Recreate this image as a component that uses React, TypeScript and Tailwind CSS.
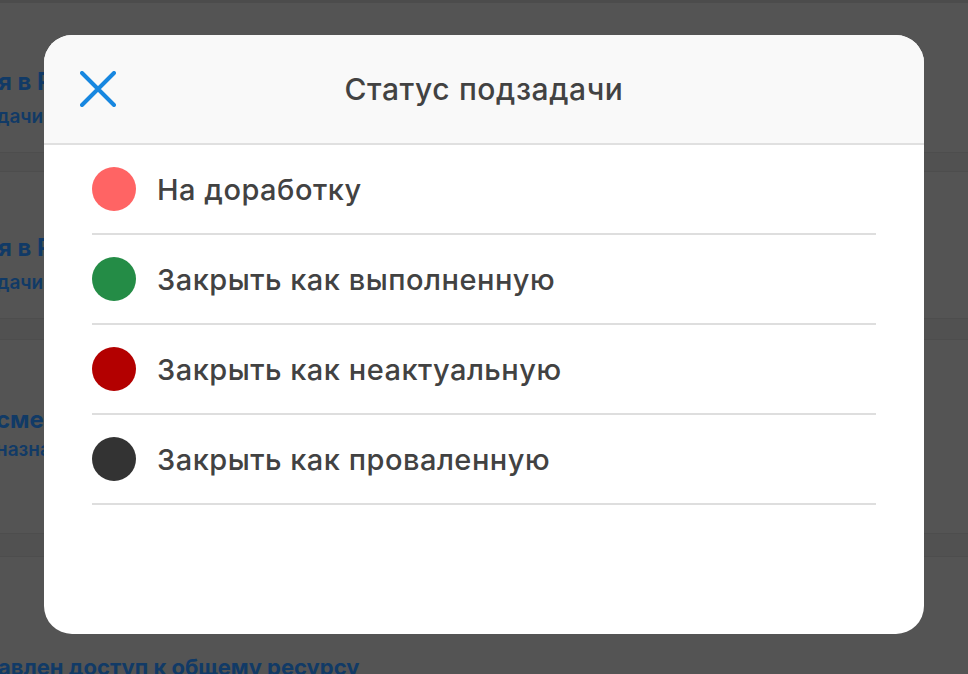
import React from "react";

const statuses = [
  { label: "На доработку", color: "bg-[#ff6464]" },
  { label: "Закрыть как выполненную", color: "bg-[#248c46]" },
  { label: "Закрыть как неактуальную", color: "bg-[#b30000]" },
  { label: "Закрыть как проваленную", color: "bg-[#333333]" },
];

function CloseIcon() {
  return (
    <svg width="36" height="36" viewBox="0 0 36 36" fill="none">
      <path d="M2 2L34 34M34 2L2 34" stroke="#1787e0" strokeWidth="4" strokeLinecap="round" />
    </svg>
  );
}

export default function App() {
  return (
    <div
      className="relative w-[968px] h-[674px] overflow-hidden bg-[#545454]"
      style={{ fontFamily: "Inter, 'Noto Sans', sans-serif" }}
    >
      {/* dimmed task list behind the sheet */}
      <div className="flex flex-col">
        <div className="h-[3px] bg-[#4c4c4c]" />
        <div className="h-[149px] flex flex-col pt-[63px] text-[#113a66] whitespace-nowrap">
          <span className="text-[24px] font-bold leading-[32px] -ml-[2px]">я в Реестре</span>
          <span className="text-[19px] font-semibold leading-[24px] mt-[7px] -ml-[3px]">дачи</span>
        </div>
        <div className="h-[20px] bg-[#515151] border-y border-[#4d4d4d]" />
        <div className="h-[146px] flex flex-col pt-[60px] text-[#113a66] whitespace-nowrap">
          <span className="text-[24px] font-bold leading-[32px] -ml-[2px]">я в Реестре</span>
          <span className="text-[19px] font-semibold leading-[24px] mt-[7px] -ml-[3px]">дачи</span>
        </div>
        <div className="h-[22px] bg-[#515151] border-y border-[#4d4d4d]" />
        <div className="h-[193px] flex flex-col pt-[28px] text-[#113a66] whitespace-nowrap">
          <span className="text-[14px] leading-[18px] text-[#3a3a3a] -ml-[4px]">.</span>
          <span className="text-[24px] font-bold leading-[32px] mt-[18px] -ml-[4px]">смена</span>
          <span className="text-[19px] font-semibold leading-[24px] mt-[2px] -ml-[4px]">назначения</span>
        </div>
        <div className="h-[24px] bg-[#515151] border-y border-[#4d4d4d]" />
        <div className="flex flex-col pt-[96px] text-[#113a66] whitespace-nowrap">
          <span className="text-[22px] font-bold leading-[28px] -ml-[2px]">авлен доступ к общему ресурсу</span>
        </div>
      </div>

      {/* status sheet */}
      <div className="absolute left-[44px] top-[35px] w-[880px] h-[599px] rounded-[28px] bg-white overflow-hidden flex flex-col">
        <div className="relative h-[110px] shrink-0 bg-[#f9f9f9] border-b-2 border-[#e0e0e0] flex items-center justify-center">
          <button className="absolute left-[36px] top-[36px] w-[36px] h-[36px] flex items-center justify-center">
            <CloseIcon />
          </button>
          <h2 className="text-[30px] font-medium text-[#424242] tracking-[0.6px]">Статус подзадачи</h2>
        </div>
        <ul className="flex flex-col px-[48px]">
          {statuses.map((s) => (
            <li
              key={s.label}
              className="h-[90px] flex items-center gap-[21px] border-b-2 border-[#dedede]"
            >
              <span className={`w-[44px] h-[44px] rounded-full shrink-0 ${s.color}`} />
              <span className="text-[29px] font-medium text-[#424242] tracking-[0.5px] leading-none">{s.label}</span>
            </li>
          ))}
        </ul>
      </div>
    </div>
  );
}
